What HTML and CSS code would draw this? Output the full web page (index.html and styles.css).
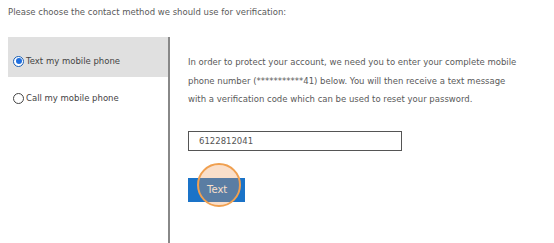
FILE: index.html
```html
<!DOCTYPE html>
<html>
<head>
<meta charset="utf-8">
<link rel="stylesheet" href="styles.css">
</head>
<body>
<p class="intro">Please choose the contact method we should use for verification:</p>
<div class="layout">
  <div class="options">
    <label class="option selected"><span class="radio checked"></span>Text my mobile phone</label>
    <label class="option"><span class="radio"></span>Call my mobile phone</label>
  </div>
  <div class="detail">
    <p class="desc">In order to protect your account, we need you to enter your complete mobile phone number (***********41) below. You will then receive a text message with a verification code which can be used to reset your password.</p>
    <div class="field">6122812041</div>
    <div class="action">
      <span class="btn">Text</span>
      <span class="highlight"></span>
    </div>
  </div>
</div>
</body>
</html>
```

FILE: styles.css
```css
* { box-sizing: border-box; }
html, body { margin: 0; padding: 0; background: #fff; }
body {
  font-family: "DejaVu Sans", Verdana, sans-serif;
  font-size: 8.5px;
  color: #5a5a5a;
  padding: 0 8px;
}
.intro {
  margin: 0;
  padding-top: 6px;
  height: 37px;
  line-height: 12px;
}
.layout {
  display: flex;
  height: 206px;
}
.options {
  width: 160px;
  display: flex;
  flex-direction: column;
}
.option {
  display: flex;
  align-items: center;
  height: 40px;
  padding-left: 5px;
  padding-top: 8px;
  color: #444;
}
.option + .option { padding-top: 2px; }
.option.selected { background: #e0e0e0; }
.radio {
  width: 11px;
  height: 11px;
  border-radius: 50%;
  border: 1px solid #444;
  background: #fff;
  margin-right: 2px;
  position: relative;
}
.radio.checked { border-color: #1a5fb4; }
.radio.checked::after {
  content: "";
  position: absolute;
  left: 1.5px; top: 1.5px;
  width: 6px; height: 6px;
  border-radius: 50%;
  background: #1f6fe0;
}
.detail {
  border-left: 2px solid #888;
  padding-left: 18px;
  flex: 1;
}
.desc {
  margin: 0;
  padding-top: 16px;
  width: 334px;
  line-height: 18.5px;
}
.field {
  margin-top: 22px;
  width: 214px;
  height: 20px;
  border: 1px solid #555;
  padding: 0 10px;
  line-height: 18px;
  color: #555;
}
.action {
  position: relative;
  margin-top: 27px;
  width: 57px;
}
.btn {
  display: block;
  width: 57px;
  height: 24px;
  background: #1a73c8;
  color: #fff;
  font-size: 10px;
  line-height: 24px;
  padding-left: 19px;
}
.highlight {
  position: absolute;
  left: 9px;
  top: -15px;
  width: 44px;
  height: 44px;
  border-radius: 50%;
  border: 2px solid #f0a050;
  background: rgba(240, 150, 80, 0.3);
}
```
